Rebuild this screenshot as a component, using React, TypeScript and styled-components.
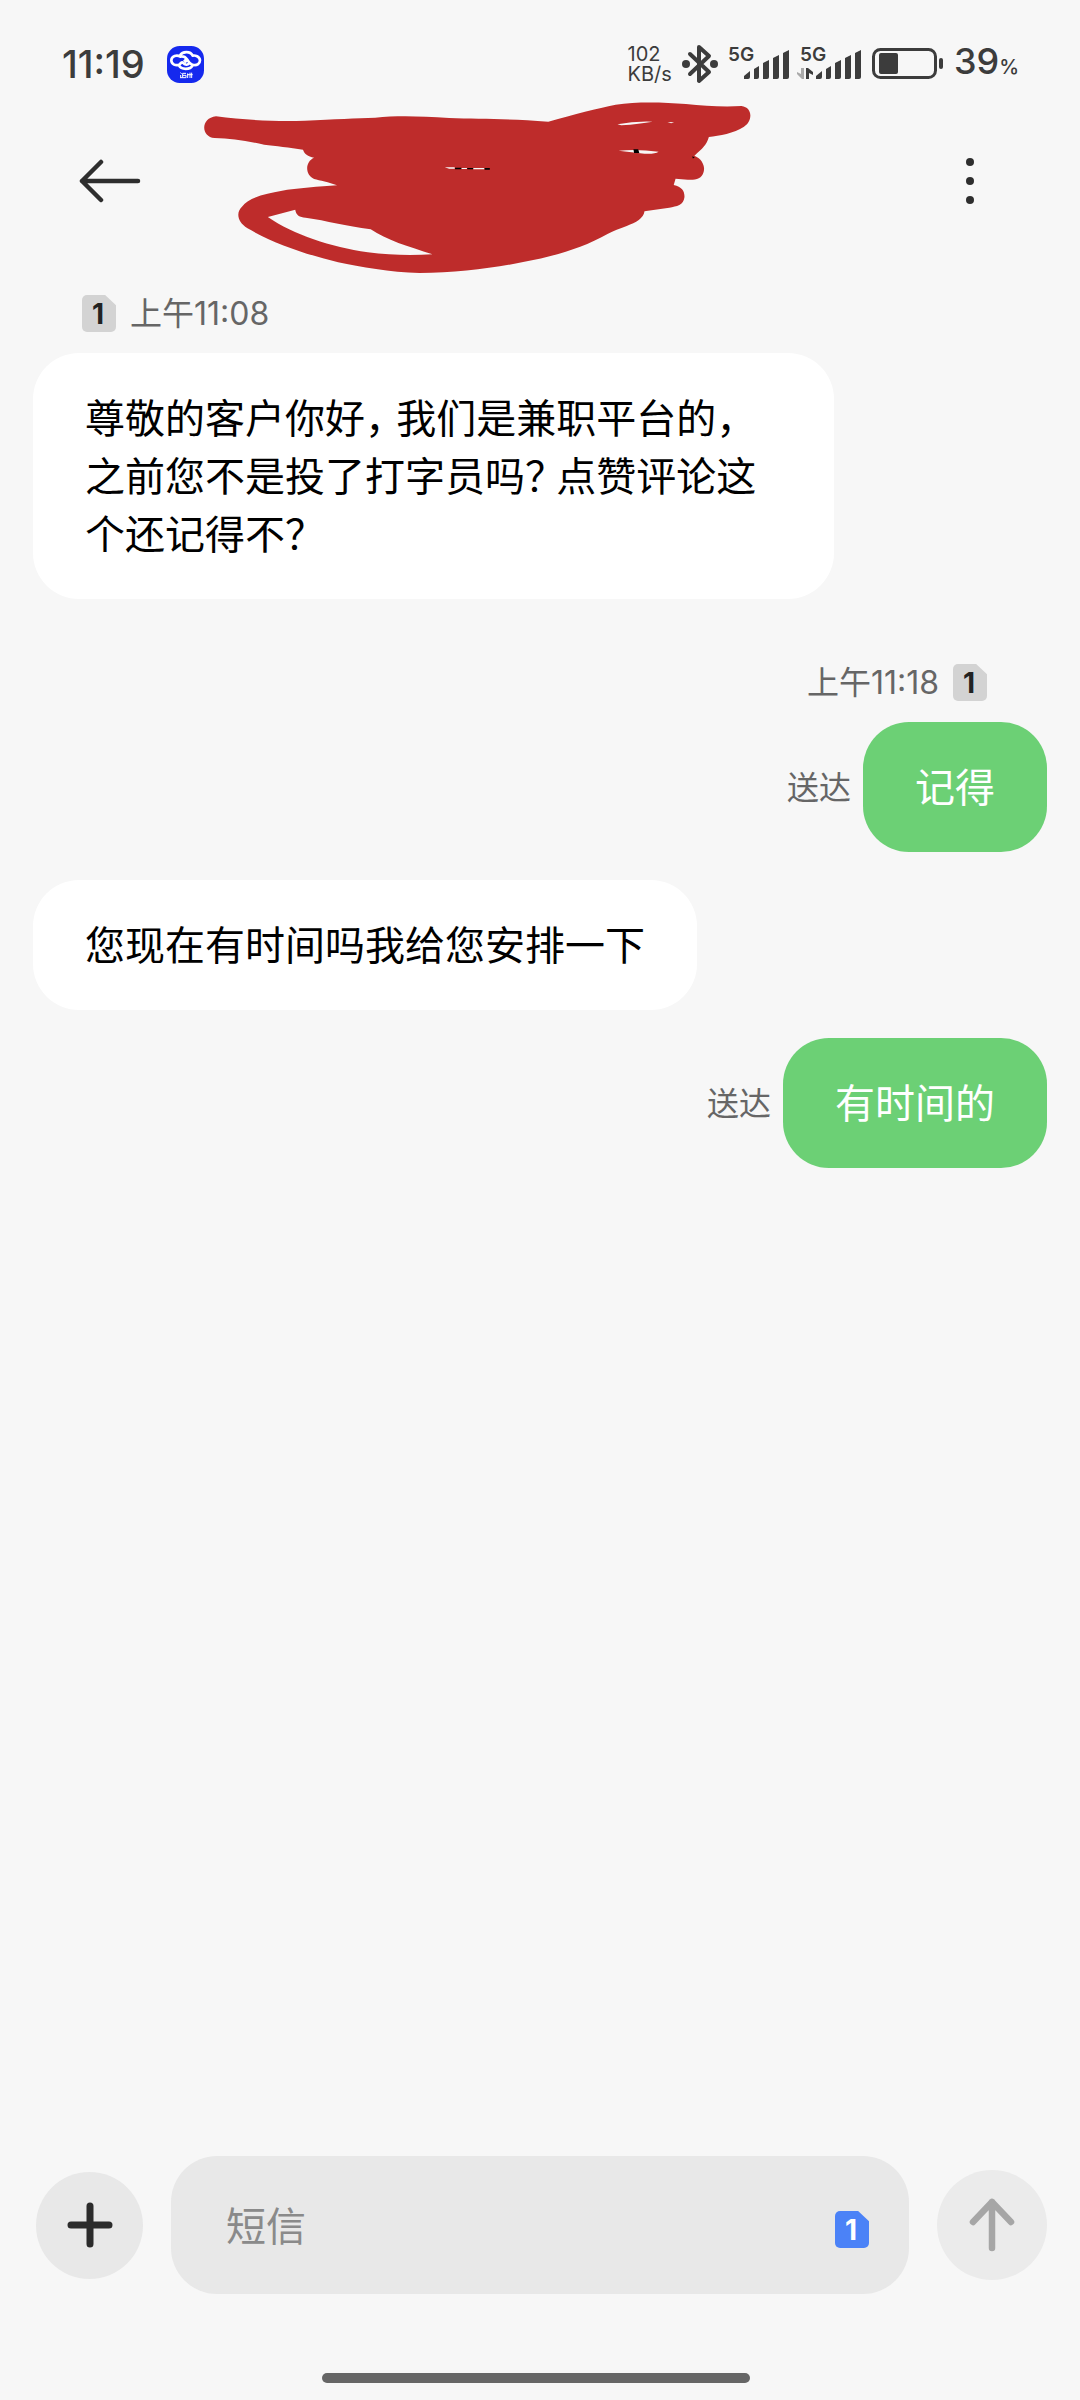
import React from "react";
import styled, { createGlobalStyle } from "styled-components";

const GlobalStyle = createGlobalStyle`
  *, *::before, *::after { box-sizing: border-box; }
  body {
    margin: 0;
    background: #f7f7f7;
    font-family: Inter, "Noto Sans CJK SC", sans-serif;
  }
  button { border: 0; padding: 0; background: none; font: inherit; cursor: pointer; }
  svg { display: block; flex: none; }
`;

const Screen = styled.div`
  min-height: 100vh;
  display: flex;
  flex-direction: column;
`;

const StatusBar = styled.div`
  height: 126px;
  padding: 2px 61px 0 62px;
  display: flex;
  align-items: center;
  justify-content: space-between;
  color: #3c3c3c;
`;

const StatusGroup = styled.div<{ $gap: number }>`
  display: flex;
  align-items: center;
  gap: ${(p) => p.$gap}px;
`;

const StatusText = styled.span<{ $small?: boolean }>`
  font-size: ${(p) => (p.$small ? 36 : 38)}px;
  line-height: 44px;
  font-weight: 500;
`;

const Percent = styled.span`
  font-size: 20px;
`;

const NetSpeed = styled.span`
  font-size: 20px;
  line-height: 20px;
`;

const Header = styled.header`
  height: 110px;
  padding: 0 77px;
  display: flex;
  align-items: center;
  gap: 59px;
`;

const IconButton = styled.button`
  width: 66px;
  height: 66px;
  display: flex;
  align-items: center;
  justify-content: center;
  color: #2e2e2e;
`;

const Redacted = styled.div`
  flex: 1;
`;

const Thread = styled.main`
  flex: 1;
  padding: 59px 33px 28px;
  display: flex;
  flex-direction: column;
  gap: 28px;
`;

const Group = styled.section`
  display: flex;
  flex-direction: column;
  gap: 21px;
  & + & { margin-top: 37px; }
`;

const Meta = styled.div<{ $mine?: boolean }>`
  display: flex;
  flex-direction: ${(p) => (p.$mine ? "row-reverse" : "row")};
  align-items: center;
  gap: 14px;
  height: 37px;
  padding: 0 60px 0 49px;
  color: #666;
  font-size: 32px;
  line-height: 36px;
`;

const SimBadge = styled.span<{ $active?: boolean }>`
  width: 34px;
  height: 37px;
  flex: none;
  display: flex;
  align-items: center;
  justify-content: center;
  padding-right: 2px;
  border-radius: 5px;
  clip-path: polygon(0 0, 68% 0, 100% 28%, 100% 100%, 0 100%);
  background: ${(p) => (p.$active ? "#4b82f7" : "#d3d3d3")};
  color: ${(p) => (p.$active ? "#fff" : "#222")};
  font-size: 28px;
  line-height: 36px;
  font-weight: 700;
`;

const Row = styled.div<{ $mine?: boolean }>`
  display: flex;
  align-items: center;
  justify-content: ${(p) => (p.$mine ? "flex-end" : "flex-start")};
  gap: 12px;
`;

const Bubble = styled.p<{ $mine?: boolean }>`
  margin: 0;
  max-width: 79%;
  padding: 37px 52px 35px;
  border-radius: 46px;
  background: ${(p) => (p.$mine ? "#6cd075" : "#fff")};
  color: ${(p) => (p.$mine ? "#fff" : "#000")};
  font-size: 40px;
  line-height: 58px;
  font-feature-settings: "halt";
`;

const Delivered = styled.span`
  padding-top: 2px;
  color: #666;
  font-size: 32px;
  line-height: 36px;
`;

const Composer = styled.form`
  display: flex;
  align-items: center;
  gap: 28px;
  padding: 0 33px 0 36px;
`;

const RoundButton = styled.button<{ $size: number; $muted?: boolean }>`
  width: ${(p) => p.$size}px;
  height: ${(p) => p.$size}px;
  flex: none;
  display: flex;
  align-items: center;
  justify-content: center;
  border-radius: 50%;
  background: ${(p) => (p.$muted ? "#ebebeb" : "#e8e8e8")};
  color: ${(p) => (p.$muted ? "#a6a6a6" : "#2b2b2b")};
`;

const Field = styled.div`
  flex: 1;
  min-width: 0;
  height: 138px;
  padding: 0 40px 0 55px;
  display: flex;
  align-items: center;
  border-radius: 46px;
  background: #e8e8e8;
`;

const TextInput = styled.input`
  flex: 1;
  min-width: 0;
  border: 0;
  padding: 3px 0 0;
  outline: 0;
  background: none;
  font: inherit;
  font-size: 40px;
  line-height: 58px;
  color: #000;
  &::placeholder { color: #8a8a8a; opacity: 1; }
`;

const SimButton = styled.button`
  padding-top: 9px;
`;

const NavBar = styled.div`
  height: 106px;
  padding: 0 8px 17px 0;
  display: flex;
  align-items: flex-end;
  justify-content: center;
`;

const HomeHandle = styled.div`
  width: 40%;
  height: 10px;
  border-radius: 5px;
  background: #666;
`;

function AppLogo() {
  return (
    <svg width="37" height="37" viewBox="0 0 111 111" aria-hidden="true">
      <rect width="111" height="111" rx="38" fill="#1529ee" />
      <g fill="none" stroke="#fff" strokeWidth="8" strokeLinecap="round" strokeLinejoin="round">
        <path d="M39 28 C46 16 70 14 77 29 C84 27 98 31 99 43 C99 53 90 58 81 57 C70 57 66 48 60 40 C54 32 48 30 40 32 C30 25 13 30 13 43 C13 56 27 60 36 56 C42 53 43 47 48 50 C54 58 62 58 66 52" />
        <path d="M36 58 C42 72 70 72 77 58" />
      </g>
      <path d="M56 36 L64 44 L56 52 L48 44 Z" fill="#fff" />
      <path
        d="M40 80 L44 83 M41 87 V94 M39 95 H58 M47 82 H57 M47 88 H57 V94 M47 82 V94 M62 82 V96 M60 86 H77 M69 80 V96 M74 80 V96"
        stroke="#fff"
        strokeWidth="3"
        fill="none"
      />
    </svg>
  );
}

function Bluetooth() {
  return (
    <svg width="36" height="40" viewBox="0 0 36 40" aria-hidden="true">
      <path
        d="M8 10 L27 28 L17 37 V3 L27 12 L8 30"
        fill="none"
        stroke="currentColor"
        strokeWidth="4"
        strokeLinejoin="round"
        strokeLinecap="round"
      />
      <circle cx="4" cy="20" r="4" fill="currentColor" />
      <circle cx="32" cy="20" r="4" fill="currentColor" />
    </svg>
  );
}

function Signal({ data }: { data?: boolean }) {
  return (
    <svg width="62" height="38" viewBox="0 0 62 38" overflow="visible" aria-label="5G">
      <text x="0" y="16" fontSize="19" fontWeight="600" fill="currentColor">
        5G
      </text>
      <g fill="currentColor">
        <path d="M16 34 V31 L22 26 V32 Q22 34 20 34 Z" />
        <path d="M26 34 V24 L31 21 V32 Q31 34 29 34 Z" />
        <path d="M35 34 V18 L41 15 V32 Q41 34 39 34 Z" />
        <path d="M45 34 V13 L51 10 V32 Q51 34 49 34 Z" />
        <path d="M55 34 V8 L61 5 V32 Q61 34 59 34 Z" />
      </g>
      {data && (
        <>
          <path d="M4 23 V34 H2 L-3 29 V27 L1 29 V23 Z" fill="#aaa" />
          <path d="M6 34 V23 H8 L13 27 V30 L9 28 V34 Z" fill="currentColor" />
        </>
      )}
    </svg>
  );
}

function Battery() {
  return (
    <svg width="72" height="32" viewBox="0 0 72 32" aria-hidden="true">
      <rect x="1.5" y="1.5" width="62" height="28" rx="7" fill="none" stroke="currentColor" strokeWidth="3" />
      <rect x="7" y="5" width="19" height="21" rx="2" fill="currentColor" />
      <rect x="67" y="10" width="4" height="11" rx="2" fill="currentColor" />
    </svg>
  );
}

function Scribble() {
  return (
    <svg width="552" height="186" viewBox="32 -6 1492 558" preserveAspectRatio="none" aria-hidden="true">
      <path
        fill="#be2c2b"
        fillRule="evenodd"
        d="M70 79 C150 90 240 96 310 92 C390 88 450 84 500 83 C560 76 620 78 700 84 C780 87 860 86 968 95 C1040 72 1100 55 1150 44 C1210 34 1280 37 1340 42 C1390 47 1440 52 1490 48 C1522 52 1520 95 1497 110 C1470 130 1430 137 1402 141 C1396 165 1385 175 1363 197 C1385 207 1392 230 1388 245 C1383 268 1365 270 1345 269 L1312 266 L1307 285 C1330 290 1337 305 1336 322 C1334 345 1315 350 1295 353 L1228 364 C1226 385 1205 398 1180 408 C1160 416 1145 422 1128 432 C1060 475 980 500 900 516 C820 535 720 548 620 549 C540 548 460 530 400 517 C310 492 230 462 155 415 C125 395 125 365 140 350 C160 320 210 310 245 303 C290 294 350 290 397 286 C375 277 350 271 335 267 C310 255 310 215 335 203 C318 200 308 190 305 179 C270 172 230 168 200 164 C150 152 110 146 66 144 C28 140 28 84 70 79 Z M210 381 L284 359 C286 375 296 382 312 383 C370 392 420 408 488 418 C530 450 590 470 655 493 C600 497 540 496 480 487 C380 470 280 435 210 381 Z"
      />
      <g fill="#f7f7f7">
        <path d="M1155 103 Q1200 93 1250 95 Q1215 102 1165 106 Z" />
        <path d="M1290 96 L1308 97 L1300 100 Z" />
        <path d="M1158 182 Q1210 177 1266 185 Q1255 193 1228 191 Z" />
        <path d="M688 232 H715 V236 H700 Z M733 234 H748 V237 H733 Z M765 234 H795 V238 H765 Z" />
      </g>
      <path d="M1198 178 H1211 L1214 189 H1200 Z M716 233 H733 V238 H716 Z M749 234 H765 V238 H749 Z M796 234 H810 V239 H796 Z M1358 198 L1364 204 L1358 205 Z" fill="#000" />
    </svg>
  );
}

export default function App() {
  return (
    <>
      <GlobalStyle />
      <Screen>
        <StatusBar>
          <StatusGroup $gap={22}>
            <StatusText>11:19</StatusText>
            <AppLogo />
          </StatusGroup>
          <StatusGroup $gap={10}>
            <NetSpeed>
              102
              <br />
              KB/s
            </NetSpeed>
            <Bluetooth />
            <Signal />
            <Signal data />
            <Battery />
            <StatusText $small>
              39<Percent>%</Percent>
            </StatusText>
          </StatusGroup>
        </StatusBar>

        <Header>
          <IconButton aria-label="返回">
            <svg width="62" height="44" viewBox="0 0 62 44" aria-hidden="true">
              <path
                d="M59 22 H3 M22 3 L3 22 L22 41"
                fill="none"
                stroke="currentColor"
                strokeWidth="4.5"
                strokeLinecap="round"
                strokeLinejoin="round"
              />
            </svg>
          </IconButton>
          <Redacted>
            <Scribble />
          </Redacted>
          <IconButton aria-label="更多">
            <svg width="10" height="50" viewBox="0 0 10 50" fill="currentColor" aria-hidden="true">
              <circle cx="5" cy="6" r="4" />
              <circle cx="5" cy="25" r="4" />
              <circle cx="5" cy="44" r="4" />
            </svg>
          </IconButton>
        </Header>

        <Thread>
          <Group>
            <Meta>
              <SimBadge>1</SimBadge>
              <time>上午11:08</time>
            </Meta>
            <Row>
              <Bubble>尊敬的客户你好， 我们是兼职平台的， 之前您不是投了打字员吗？ 点赞评论这个还记得不？</Bubble>
            </Row>
          </Group>
          <Group>
            <Meta $mine>
              <SimBadge>1</SimBadge>
              <time>上午11:18</time>
            </Meta>
            <Row $mine>
              <Delivered>送达</Delivered>
              <Bubble $mine>记得</Bubble>
            </Row>
          </Group>
          <Row>
            <Bubble>您现在有时间吗我给您安排一下</Bubble>
          </Row>
          <Row $mine>
            <Delivered>送达</Delivered>
            <Bubble $mine>有时间的</Bubble>
          </Row>
        </Thread>

        <Composer onSubmit={(e) => e.preventDefault()}>
          <RoundButton type="button" $size={107} aria-label="添加">
            <svg width="46" height="46" viewBox="0 0 46 46" aria-hidden="true">
              <path d="M23 4 V42 M4 23 H42" stroke="currentColor" strokeWidth="7" strokeLinecap="round" />
            </svg>
          </RoundButton>
          <Field>
            <TextInput aria-label="短信" placeholder="短信" />
            <SimButton type="button" aria-label="SIM 1">
              <SimBadge $active>1</SimBadge>
            </SimButton>
          </Field>
          <RoundButton type="submit" $size={110} $muted aria-label="发送">
            <svg width="46" height="54" viewBox="0 0 46 54" aria-hidden="true">
              <path
                d="M23 50 V4 M4 24 L23 4 L42 24"
                fill="none"
                stroke="currentColor"
                strokeWidth="6.5"
                strokeLinecap="round"
                strokeLinejoin="round"
              />
            </svg>
          </RoundButton>
        </Composer>

        <NavBar>
          <HomeHandle />
        </NavBar>
      </Screen>
    </>
  );
}
